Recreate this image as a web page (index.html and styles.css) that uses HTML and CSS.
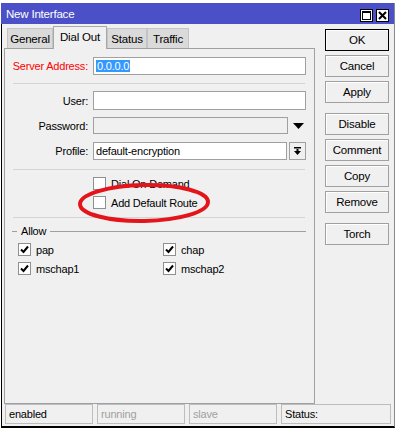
FILE: index.html
```html
<!DOCTYPE html>
<html lang="en">
<head>
    <meta charset="UTF-8">
    <title>New Interface</title>
    <link rel="stylesheet" href="styles.css">
</head>
<body>
    <div class="window">
        <div class="titlebar">
            <span class="title">New Interface</span>
            <div class="title-btns">
                <span class="tbtn">
                    <svg width="11" height="11" viewBox="0 0 11 11"><rect x="1.5" y="1.5" width="8" height="8" fill="none" stroke="#000" stroke-width="1"/><rect x="1" y="1" width="9" height="2" fill="#000"/></svg>
                </span>
                <span class="tbtn">
                    <svg width="11" height="11" viewBox="0 0 11 11"><path d="M2 2 L9 9 M9 2 L2 9" stroke="#000" stroke-width="2"/></svg>
                </span>
            </div>
        </div>

        <div class="body">
            <div class="tabarea">
                <div class="tabs">
                    <span class="tab">General</span>
                    <span class="tab active">Dial Out</span>
                    <span class="tab">Status</span>
                    <span class="tab">Traffic</span>
                </div>
                <div class="panel">
                    <div class="row row-server">
                        <span class="label req">Server Address:</span>
                        <div class="input"><span class="selected">0.0.0.0</span></div>
                    </div>
                    <div class="sep sep-1"></div>
                    <div class="row row-user">
                        <span class="label">User:</span>
                        <div class="input"></div>
                    </div>
                    <div class="row row-pass">
                        <span class="label">Password:</span>
                        <div class="with-btn">
                            <div class="input disabled"></div>
                            <span class="drop">
                                <svg width="11" height="6" viewBox="0 0 11 6"><path d="M0 0 H11 L5.5 6 Z" fill="#000"/></svg>
                            </span>
                        </div>
                    </div>
                    <div class="row row-profile">
                        <span class="label">Profile:</span>
                        <div class="with-btn">
                            <div class="input">default-encryption</div>
                            <span class="drop-btn">
                                <svg width="9" height="9" viewBox="0 0 9 9"><rect x="1" y="0" width="7" height="1.5" fill="#000"/><path d="M3.5 2 H5.5 V4 H8 L4.5 8 L1 4 H3.5 Z" fill="#000"/></svg>
                            </span>
                        </div>
                    </div>
                    <div class="sep sep-2"></div>
                    <div class="row row-cb1">
                        <span class="label"></span>
                        <div class="check"><span class="box"></span><span>Dial On Demand</span></div>
                    </div>
                    <div class="row row-cb2">
                        <span class="label"></span>
                        <div class="check"><span class="box"></span><span>Add Default Route</span></div>
                    </div>
                    <div class="sep sep-3"></div>

                    <div class="legend"><span class="line-short"></span><span>Allow</span><span class="line-long"></span></div>
                    <div class="allow">
                        <div class="check"><span class="box checked"><svg width="11" height="11" viewBox="0 0 11 11"><path d="M2 5.5 L4.5 8 L9 2.5" fill="none" stroke="#000" stroke-width="2"/></svg></span><span>pap</span></div>
                        <div class="check"><span class="box checked"><svg width="11" height="11" viewBox="0 0 11 11"><path d="M2 5.5 L4.5 8 L9 2.5" fill="none" stroke="#000" stroke-width="2"/></svg></span><span>chap</span></div>
                        <div class="check"><span class="box checked"><svg width="11" height="11" viewBox="0 0 11 11"><path d="M2 5.5 L4.5 8 L9 2.5" fill="none" stroke="#000" stroke-width="2"/></svg></span><span>mschap1</span></div>
                        <div class="check"><span class="box checked"><svg width="11" height="11" viewBox="0 0 11 11"><path d="M2 5.5 L4.5 8 L9 2.5" fill="none" stroke="#000" stroke-width="2"/></svg></span><span>mschap2</span></div>
                    </div>

                    <!-- red annotation ring -->
                    <svg class="ring" width="140" height="46" viewBox="0 0 140 46">
                        <ellipse cx="70" cy="23" rx="64" ry="18" fill="none" stroke="#e4141b" stroke-width="4" transform="rotate(-1 70 23)"/>
                    </svg>
                </div>
            </div>

            <div class="buttons">
                <span class="btn focus">OK</span>
                <span class="btn">Cancel</span>
                <span class="btn">Apply</span>
                <span class="btn group">Disable</span>
                <span class="btn">Comment</span>
                <span class="btn">Copy</span>
                <span class="btn">Remove</span>
                <span class="btn group">Torch</span>
            </div>
        </div>

        <div class="statusbar">
            <span class="cell">enabled</span>
            <span class="cell dim">running</span>
            <span class="cell dim">slave</span>
            <span class="cell wide">Status:</span>
        </div>
    </div>
</body>
</html>
```

FILE: styles.css
```css
body {
    margin: 0;
    background-color: #ffffff;
    font-family: "Liberation Sans", Arial, sans-serif;
    font-size: 11px;
    letter-spacing: -0.2px;
    color: #000;
}

.window {
    margin: 3px 0 0 1px;
    width: 392px;
    height: 423px;
    border-left: 1px solid #000;
    border-right: 1px solid #8a8a8a;
    border-bottom: 2px solid #000;
    background-color: #f0f0f0;
    display: flex;
    flex-direction: column;
    box-sizing: content-box;
    white-space: nowrap;
}

.titlebar {
    height: 21px;
    background-color: #4b50c8;
    display: flex;
    align-items: center;
    justify-content: space-between;
    padding: 0 5px 0 5px;
    margin-left: -1px;
}

.title {
    color: #fff;
    font-size: 11.5px;
    margin-top: 1px;
}

.title-btns {
    display: flex;
    gap: 3px;
    margin-top: 3px;
}

.tbtn {
    width: 13px;
    height: 13px;
    box-sizing: border-box;
    background-color: #fff;
    border: 1px solid #000;
    display: flex;
    align-items: center;
    justify-content: center;
}

.body {
    flex: 1;
    display: flex;
}

.tabarea {
    width: 311px;
    margin-left: 2px;
    display: flex;
    flex-direction: column;
}

.tabs {
    height: 24px;
    display: flex;
    align-items: flex-end;
    padding-left: 3px;
}

.tab {
    height: 20px;
    box-sizing: border-box;
    background-color: #dadada;
    border: 1px solid #c4c4c4;
    border-bottom: none;
    display: flex;
    align-items: center;
    justify-content: center;
    font-size: 11.5px;
}

.tab:nth-child(1) { width: 46px; }
.tab:nth-child(2) { width: 54px; }
.tab:nth-child(3) { width: 40px; }
.tab:nth-child(4) { width: 42px; }

.tab.active {
    height: 23px;
    background-color: #f0f0f0;
    border-color: #a8a8a8;
    margin-bottom: -1px;
    position: relative;
    z-index: 1;
    padding-bottom: 3px;
}

.panel {
    flex: 1;
    border: 1px solid #a0a0a0;
    padding-left: 3px;
    position: relative;
}

.row {
    display: grid;
    grid-template-columns: 80px 213px;
    column-gap: 5px;
    align-items: center;
}

.label {
    text-align: right;
}

.label.req {
    color: #ff0000;
}

.input {
    height: 18px;
    box-sizing: border-box;
    background-color: #fff;
    border: 1px solid #a0a0a0;
    display: flex;
    align-items: center;
    padding-left: 2px;
}

.input.disabled {
    background-color: #f0f0f0;
}

.selected {
    background-color: #3399ff;
    color: #fff;
    padding: 0 1px;
}

.row-server { margin-top: 8px; }
.row-server .input { height: 18px; }
.row-user { margin-top: 7px; }
.row-user .input { height: 19px; }
.row-pass { margin-top: 7px; }
.row-pass .input { height: 17px; }
.row-profile { margin-top: 8px; }
.row-cb1 { margin-top: 7px; }
.row-cb2 { margin-top: 6px; }

.with-btn {
    display: flex;
    align-items: center;
    gap: 2px;
}

.with-btn .input {
    width: 195px;
}

.drop {
    width: 16px;
    display: flex;
    justify-content: center;
}

.drop-btn {
    width: 17px;
    height: 18px;
    box-sizing: border-box;
    border: 1px solid #a0a0a0;
    display: flex;
    align-items: center;
    justify-content: center;
}

.sep {
    width: 292px;
    margin-left: 5px;
    border-top: 1px solid #d4d4d4;
}

.sep-1 { margin-top: 8px; }
.sep-2 { margin-top: 9px; }
.sep-3 { margin-top: 8px; }

.check {
    display: flex;
    align-items: center;
    gap: 5px;
    height: 13px;
}

.box {
    width: 13px;
    height: 13px;
    box-sizing: border-box;
    background-color: #fff;
    border: 1px solid #8e8f8f;
    display: flex;
    align-items: center;
    justify-content: center;
    flex-shrink: 0;
}

.legend {
    margin-top: 6px;
    margin-left: 4px;
    height: 14px;
    display: flex;
    align-items: center;
    gap: 4px;
}

.line-short {
    width: 5px;
    border-top: 1px solid #a0a0a0;
}

.line-long {
    flex: 1;
    margin-right: 8px;
    border-top: 1px solid #a0a0a0;
}

.allow {
    display: grid;
    grid-template-columns: 145px 145px;
    row-gap: 6px;
    padding-left: 10px;
    margin-top: 5px;
}

.ring {
    position: absolute;
    left: 69px;
    top: 131px;
}

.buttons {
    width: 64px;
    margin-left: 10px;
    padding-top: 5px;
    display: flex;
    flex-direction: column;
    gap: 4px;
}

.btn {
    height: 22px;
    box-sizing: border-box;
    background-color: #f0f0f0;
    border: 1px solid #a0a0a0;
    box-shadow: inset 1px 1px 0 #fff;
    display: flex;
    align-items: center;
    justify-content: center;
    font-size: 11.5px;
}

.btn.focus {
    border-color: #000;
}

.btn.group {
    margin-top: 6px;
}

.statusbar {
    height: 20px;
    margin-bottom: 2px;
    display: flex;
    gap: 4px;
    padding-left: 3px;
}

.cell {
    width: 88px;
    box-sizing: border-box;
    border: 1px solid #bdbdbd;
    padding-left: 3px;
    display: flex;
    align-items: center;
}

.cell.dim {
    color: #a0a0a0;
}

.cell.wide {
    width: 110px;
}
```
